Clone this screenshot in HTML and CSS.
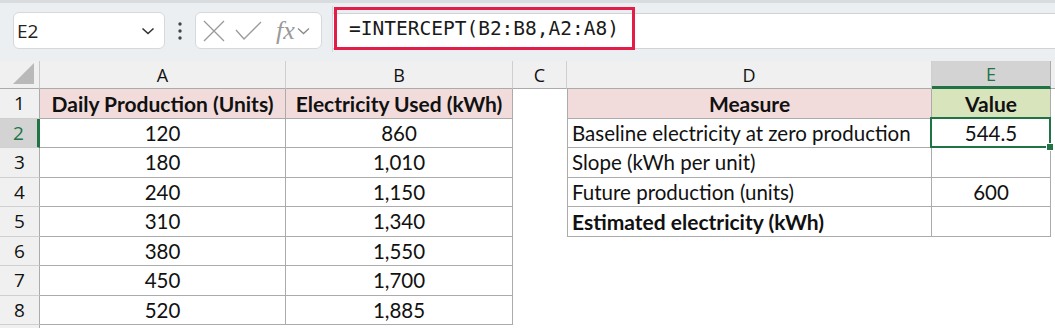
FILE: index.html
```html
<!DOCTYPE html>
<html lang="en">
<head>
    <meta charset="UTF-8">
    <title>INTERCEPT</title>
    <link rel="stylesheet" href="styles.css">
</head>
<body>
    <div class="toolbar">
        <div class="namebox">
            <span>E2</span>
            <svg width="14" height="10" viewBox="0 0 14 10"><path d="M1.5 2.5 L7 7.5 L12.5 2.5" fill="none" stroke="#333" stroke-width="1.6"/></svg>
        </div>
        <svg class="dots" width="6" height="20" viewBox="0 0 6 20"><circle cx="3" cy="3" r="1.7" fill="#444"/><circle cx="3" cy="10" r="1.7" fill="#444"/><circle cx="3" cy="17" r="1.7" fill="#444"/></svg>
        <div class="fxbox">
            <svg width="24" height="24" viewBox="0 0 24 24"><path d="M2 2 L22 22 M22 2 L2 22" stroke="#9a9a9a" stroke-width="1.3" fill="none"/></svg>
            <svg width="27" height="20" viewBox="0 0 27 20"><path d="M1 9 L9 18 L26 1" stroke="#9a9a9a" stroke-width="1.3" fill="none"/></svg>
            <span class="fx">fx</span>
            <svg width="13" height="8" viewBox="0 0 13 8"><path d="M1 1.5 L6.5 6.5 L12 1.5" fill="none" stroke="#8a8a8a" stroke-width="1.3"/></svg>
        </div>
        <div class="formula">
            <div class="formula-text">=INTERCEPT(B2:B8,A2:A8)</div>
        </div>
    </div>

    <div class="sheet">
        <div class="corner"><div class="tri"></div></div>
        <div class="colhead">A</div>
        <div class="colhead">B</div>
        <div class="colhead">C</div>
        <div class="colhead">D</div>
        <div class="colhead sel">E</div>
        <div class="colhead end"></div>

        <div class="rowhead">1</div>
        <div class="cell t hd">Daily Production (Units)</div>
        <div class="cell t hd">Electricity Used (kWh)</div>
        <div class="cell gap"></div>
        <div class="cell t dl hd">Measure</div>
        <div class="cell t hd green">Value</div>
        <div class="cell end"></div>

        <div class="rowhead sel">2</div>
        <div class="cell t c">120</div>
        <div class="cell t c">860</div>
        <div class="cell gap"></div>
        <div class="cell t dl">Baseline electricity at zero production</div>
        <div class="cell t c active">544.5</div>
        <div class="cell end"></div>

        <div class="rowhead">3</div>
        <div class="cell t c">180</div>
        <div class="cell t c">1,010</div>
        <div class="cell gap"></div>
        <div class="cell t dl">Slope (kWh per unit)</div>
        <div class="cell t c"></div>
        <div class="cell end"></div>

        <div class="rowhead">4</div>
        <div class="cell t c">240</div>
        <div class="cell t c">1,150</div>
        <div class="cell gap"></div>
        <div class="cell t dl">Future production (units)</div>
        <div class="cell t c">600</div>
        <div class="cell end"></div>

        <div class="rowhead">5</div>
        <div class="cell t c">310</div>
        <div class="cell t c">1,340</div>
        <div class="cell gap"></div>
        <div class="cell t dl b">Estimated electricity (kWh)</div>
        <div class="cell t c"></div>
        <div class="cell end"></div>

        <div class="rowhead">6</div>
        <div class="cell t c">380</div>
        <div class="cell t c">1,550</div>
        <div class="cell gap"></div>
        <div class="cell gap"></div>
        <div class="cell gap"></div>
        <div class="cell end"></div>

        <div class="rowhead">7</div>
        <div class="cell t c">450</div>
        <div class="cell t c">1,700</div>
        <div class="cell gap"></div>
        <div class="cell gap"></div>
        <div class="cell gap"></div>
        <div class="cell end"></div>

        <div class="rowhead">8</div>
        <div class="cell t c">520</div>
        <div class="cell t c">1,885</div>
        <div class="cell gap"></div>
        <div class="cell gap"></div>
        <div class="cell gap"></div>
        <div class="cell end"></div>

        <div class="rowhead last"></div>
    </div>
</body>
</html>
```

FILE: styles.css
```css
body {
    margin: 0;
    width: 1055px;
    height: 328px;
    overflow: hidden;
    background: #fff;
    font-family: "Open Sans", sans-serif;
}
.toolbar {
    height: 61px;
    background: #ECEFF2;
    border-top: 3px solid #D9DCDF;
    box-sizing: border-box;
    display: flex;
    align-items: flex-start;
    padding-top: 9px;
}
.namebox {
    margin-left: 13px;
    width: 152px;
    height: 37px;
    box-sizing: border-box;
    background: #fff;
    border: 1px solid #D6D9DC;
    border-radius: 6px;
    display: flex;
    align-items: center;
    justify-content: space-between;
    padding: 0 9px 0 3px;
    font-size: 19px;
    color: #222;
}
.dots {
    margin: 9px 12px 0 12px;
}
.fxbox {
    width: 127px;
    height: 37px;
    box-sizing: border-box;
    background: #fff;
    border: 1px solid #D6D9DC;
    border-radius: 6px;
    display: flex;
    align-items: center;
    padding: 0 5px 0 6px;
    gap: 9px;
}
.fx {
    font-family: "Liberation Serif", serif;
    font-style: italic;
    font-size: 26px;
    line-height: 1;
    color: #9a9a9a;
    margin-left: 5px;
    margin-right: -7px;
}
.formula {
    flex: 1;
    margin-left: 10px;
    margin-top: -6px;
    height: 46px;
    box-sizing: border-box;
    border-left: 1px solid #D6D9DC;
    display: flex;
    align-items: flex-end;
    position: relative;
}
.formula::before {
    content: "";
    position: absolute;
    left: 0;
    right: 0;
    top: 7px;
    bottom: 3px;
    background: #fff;
    border-top: 1px solid #D0D3D6;
    border-bottom: 1px solid #D0D3D6;
}
.formula-text {
    position: relative;
    margin: 0 0 2px 1px;
    height: 43px;
    box-sizing: border-box;
    border: 3px solid #E11D48;
    padding: 0 13px 0 12px;
    font-family: "DejaVu Sans Mono", monospace;
    font-size: 19.5px;
    line-height: 37px;
    color: #1a1a1a;
}
.sheet {
    display: grid;
    grid-template-columns: 40px 246px 227px 54px 365px 119px 4px;
    grid-template-rows: 28px repeat(8, 29.5px) 1fr;
    height: 267px;
    font-family: "Lato", sans-serif;
}
.corner {
    background: #F0F0F0;
    border-right: 1px solid #C8C8C8;
    border-bottom: 1px solid #ABABAB;
    position: relative;
}
.tri {
    position: absolute;
    right: 5px;
    bottom: 4px;
    width: 0;
    height: 0;
    border-left: 21px solid transparent;
    border-bottom: 21px solid #B9B9B9;
}
.colhead {
    background: #F0F0F0;
    border-right: 1px solid #CFCFCF;
    border-bottom: 1px solid #ABABAB;
    display: flex;
    align-items: center;
    justify-content: center;
    font-family: "Open Sans", sans-serif;
    font-size: 18px;
    color: #111;
}
.colhead.sel {
    background: #D3D3D3;
    color: #217346;
    border-bottom: 3px solid #217346;
    border-right-color: #ABABAB;
}
.colhead.end {
    border-right: none;
}
.rowhead {
    background: #F0F0F0;
    border-right: 1px solid #ABABAB;
    border-bottom: 1px solid #CFCFCF;
    display: flex;
    align-items: center;
    justify-content: center;
    font-family: "Open Sans", sans-serif;
    font-size: 19px;
    color: #111;
}
.rowhead.sel {
    background: #D3D3D3;
    color: #217346;
    border-right: 3px solid #217346;
}
.rowhead.last {
    border-bottom: none;
}
.cell {
    display: flex;
    align-items: center;
    font-size: 20.5px;
    color: #111;
    white-space: nowrap;
    box-sizing: border-box;
}
.cell.t {
    border-right: 1px solid #ABABAB;
    border-bottom: 1px solid #ABABAB;
    padding: 0 4px;
}
.cell.dl {
    border-left: 1px solid #ABABAB;
}
.cell.c, .cell.hd {
    justify-content: center;
}
.cell.hd {
    background: #F2DCDB;
    font-weight: bold;
    font-size: 21px;
}
.cell.hd.green {
    background: #D8E4BC;
}
.cell.b {
    font-weight: bold;
    font-size: 21px;
}
.cell.active {
    position: relative;
}
.cell.active::after {
    content: "";
    position: absolute;
    left: -2px;
    top: -2px;
    right: -1px;
    bottom: -1px;
    border: 2px solid #217346;
}
.cell.active::before {
    content: "";
    position: absolute;
    right: -4px;
    bottom: -4px;
    width: 6px;
    height: 6px;
    background: #217346;
    border: 1px solid #fff;
    z-index: 1;
}
```
